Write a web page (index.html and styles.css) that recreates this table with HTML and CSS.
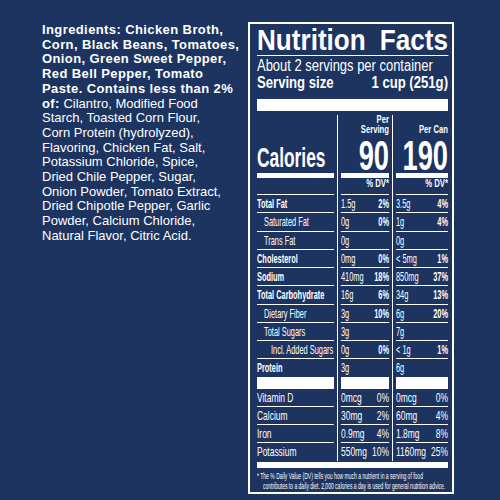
FILE: index.html
```html
<!DOCTYPE html>
<html lang="en">
<head>
    <meta charset="UTF-8">
    <meta name="viewport" content="width=device-width, initial-scale=1.0">
    <title>Nutrition Facts | Chicken Tortilla Soup</title>
    <link rel="stylesheet" href="styles.css">
</head>
<body>

    <!-- Ingredients -->
    <p class="ingredients">
        <b>Ingredients: Chicken Broth,<br>Corn, Black Beans, Tomatoes,<br>Onion, Green Sweet Pepper,<br>Red Bell Pepper, Tomato<br>Paste. Contains less than 2%<br>of:</b> Cilantro, Modified Food<br>Starch, Toasted Corn Flour,<br>Corn Protein (hydrolyzed),<br>Flavoring, Chicken Fat, Salt,<br>Potassium Chloride, Spice,<br>Dried Chile Pepper, Sugar,<br>Onion Powder, Tomato Extract,<br>Dried Chipotle Pepper, Garlic<br>Powder, Calcium Chloride,<br>Natural Flavor, Citric Acid.
    </p>

    <!-- Label -->
    <div class="label">
        <div class="title sq"><span>Nutrition</span><span>Facts</span></div>
        <div class="servings sq">About 2 servings per container</div>
        <div class="size sq"><span>Serving size</span><span>1 cup (251g)</span></div>
        <div class="bar bar-lg"></div>

        <div class="facts">
            <div class="cols head">
                <div>
                    <div class="cal sq">Calories</div>
                    <div class="bar"></div>
                    <div class="dv"></div>
                </div>
                <div>
                    <div class="small sq">Per</div>
                    <div class="small sq">Serving</div>
                    <div class="big sq">90</div>
                    <div class="bar"></div>
                    <div class="small dv sq">% DV*</div>
                </div>
                <div>
                    <div class="small sq">Per Can</div>
                    <div class="big sq">190</div>
                    <div class="bar"></div>
                    <div class="small dv sq">% DV*</div>
                </div>
            </div>

            <div class="cols row sq"><div><b>Total Fat</b></div><div>1.5g<b>2%</b></div><div>3.5g<b>4%</b></div></div>
            <div class="cols row sq ind"><div>Saturated Fat</div><div>0g<b>0%</b></div><div>1g<b>4%</b></div></div>
            <div class="cols row sq ind"><div>Trans Fat</div><div>0g</div><div>0g</div></div>
            <div class="cols row sq"><div><b>Cholesterol</b></div><div>0mg<b>0%</b></div><div>&lt; 5mg<b>1%</b></div></div>
            <div class="cols row sq"><div><b>Sodium</b></div><div>410mg<b>18%</b></div><div>850mg<b>37%</b></div></div>
            <div class="cols row sq"><div><b>Total Carbohydrate</b></div><div>16g<b>6%</b></div><div>34g<b>13%</b></div></div>
            <div class="cols row sq ind"><div>Dietary Fiber</div><div>3g<b>10%</b></div><div>6g<b>20%</b></div></div>
            <div class="cols row sq ind"><div>Total Sugars</div><div>3g</div><div>7g</div></div>
            <div class="cols row sq ind2"><div>Incl. Added Sugars</div><div>0g<b>0%</b></div><div>&lt; 1g<b>1%</b></div></div>
            <div class="cols row sq last"><div><b>Protein</b></div><div>3g</div><div>6g</div></div>

            <div class="cols bars"><div></div><div></div><div></div></div>

            <div class="cols row sq vit"><div>Vitamin D</div><div>0mcg<span>0%</span></div><div>0mcg<span>0%</span></div></div>
            <div class="cols row sq vit"><div>Calcium</div><div>30mg<span>2%</span></div><div>60mg<span>4%</span></div></div>
            <div class="cols row sq vit"><div>Iron</div><div>0.9mg<span>4%</span></div><div>1.8mg<span>8%</span></div></div>
            <div class="cols row sq vit last"><div>Potassium</div><div>550mg<span>10%</span></div><div>1160mg<span>25%</span></div></div>
        </div>

        <div class="bar bar-full"></div>
        <div class="note">
            <div class="sq">* The % Daily Value (DV) tells you how much a nutrient in a serving of food</div>
            <div class="sq">contributes to a daily diet. 2,000 calories a day is used for general nutrition advice.</div>
        </div>
    </div>

</body>
</html>
```

FILE: styles.css
```css
* {
    margin: 0;
    padding: 0;
    box-sizing: border-box;
}
body {
    display: flex;
    align-items: flex-start;
    width: 500px;
    height: 500px;
    overflow: hidden;
    background: #1c345f;
    color: #fff;
    font-family: "Liberation Sans", Arial, sans-serif;
}


.ingredients {
    flex: none;
    width: 248px;
    padding: 23px 0 0 42px;
    font-size: 13px;
    line-height: 14.7px;
    white-space: nowrap;
}
.ingredients b {
    letter-spacing: 0.4px;
}


/* label text is condensed: laid out wide, then squeezed */
.sq {
    width: calc(100% / var(--sx));
    transform: scaleX(var(--sx));
    transform-origin: left center;
    white-space: nowrap;
}
.label {
    flex: none;
    width: 206px;
    margin-top: 22px;
    border: 2px solid #fff;
    padding: 0 4px 1px 7px;
}
.title {
    --sx: 0.87;
    display: flex;
    justify-content: space-between;
    padding-top: 1px;
    font-size: 30px;
    line-height: 30px;
    font-weight: bold;
    border-bottom: 1px solid #fff;
}
.servings {
    --sx: 0.81;
    margin-top: 2px;
    font-size: 16px;
    line-height: 16px;
}
.size {
    --sx: 0.82;
    display: flex;
    justify-content: space-between;
    margin-top: 1px;
    font-size: 16px;
    line-height: 16px;
    font-weight: bold;
}
.bar {
    background: #fff;
}
.bar-lg {
    height: 12px;
    margin: 8px 0 4px;
}
.bar-full {
    height: 6px;
    margin-top: 1.5px;
}


.facts {
    background:
        linear-gradient(#fff, #fff) 80px 0 / 1px 100% no-repeat,
        linear-gradient(#fff, #fff) 135px 0 / 1px 100% no-repeat;
}
.cols {
    display: grid;
    grid-template-columns: minmax(0, 77fr) minmax(0, 48fr) minmax(0, 52fr);
    column-gap: 7px;
}
.head > div {
    display: flex;
    flex-direction: column;
    justify-content: flex-end;
    height: 80px;
    padding-bottom: 4px;
    border-bottom: 1px solid #fff;
}
.head .bar {
    height: 5px;
    margin-top: 1px;
}
.small {
    --sx: 0.77;
    font-size: 10px;
    line-height: 10px;
    font-weight: bold;
    text-align: right;
}
.big {
    --sx: 0.65;
    margin-top: 5px;
    font-size: 42px;
    line-height: 32px;
    font-weight: bold;
    text-align: right;
}
.cal {
    --sx: 0.62;
    font-size: 28px;
    line-height: 28px;
    font-weight: bold;
}
.dv {
    height: 12px;
    line-height: 12px;
}


.row {
    --sx: 0.57;
    column-gap: calc(7px / var(--sx));
    font-size: 13px;
}
.row > div {
    display: flex;
    justify-content: space-between;
    height: 18.25px;
    line-height: 17.25px;
    border-bottom: 1px solid #fff;
}
.row.last > div {
    height: 17.25px;
    border-bottom: 0;
}
.row.ind > div:first-child {
    padding-left: calc(7px / var(--sx));
}
.row.ind2 > div:first-child {
    padding-left: calc(14px / var(--sx));
}
.row.vit {
    --sx: 0.65;
}
.bars > div {
    height: 12px;
    background: #fff;
}


.note {
    padding-top: 3px;
    font-size: 8.5px;
    line-height: 10px;
}
.note .sq {
    --sx: 0.59;
}
.note .sq + .sq {
    padding-left: 10px;
}
```
